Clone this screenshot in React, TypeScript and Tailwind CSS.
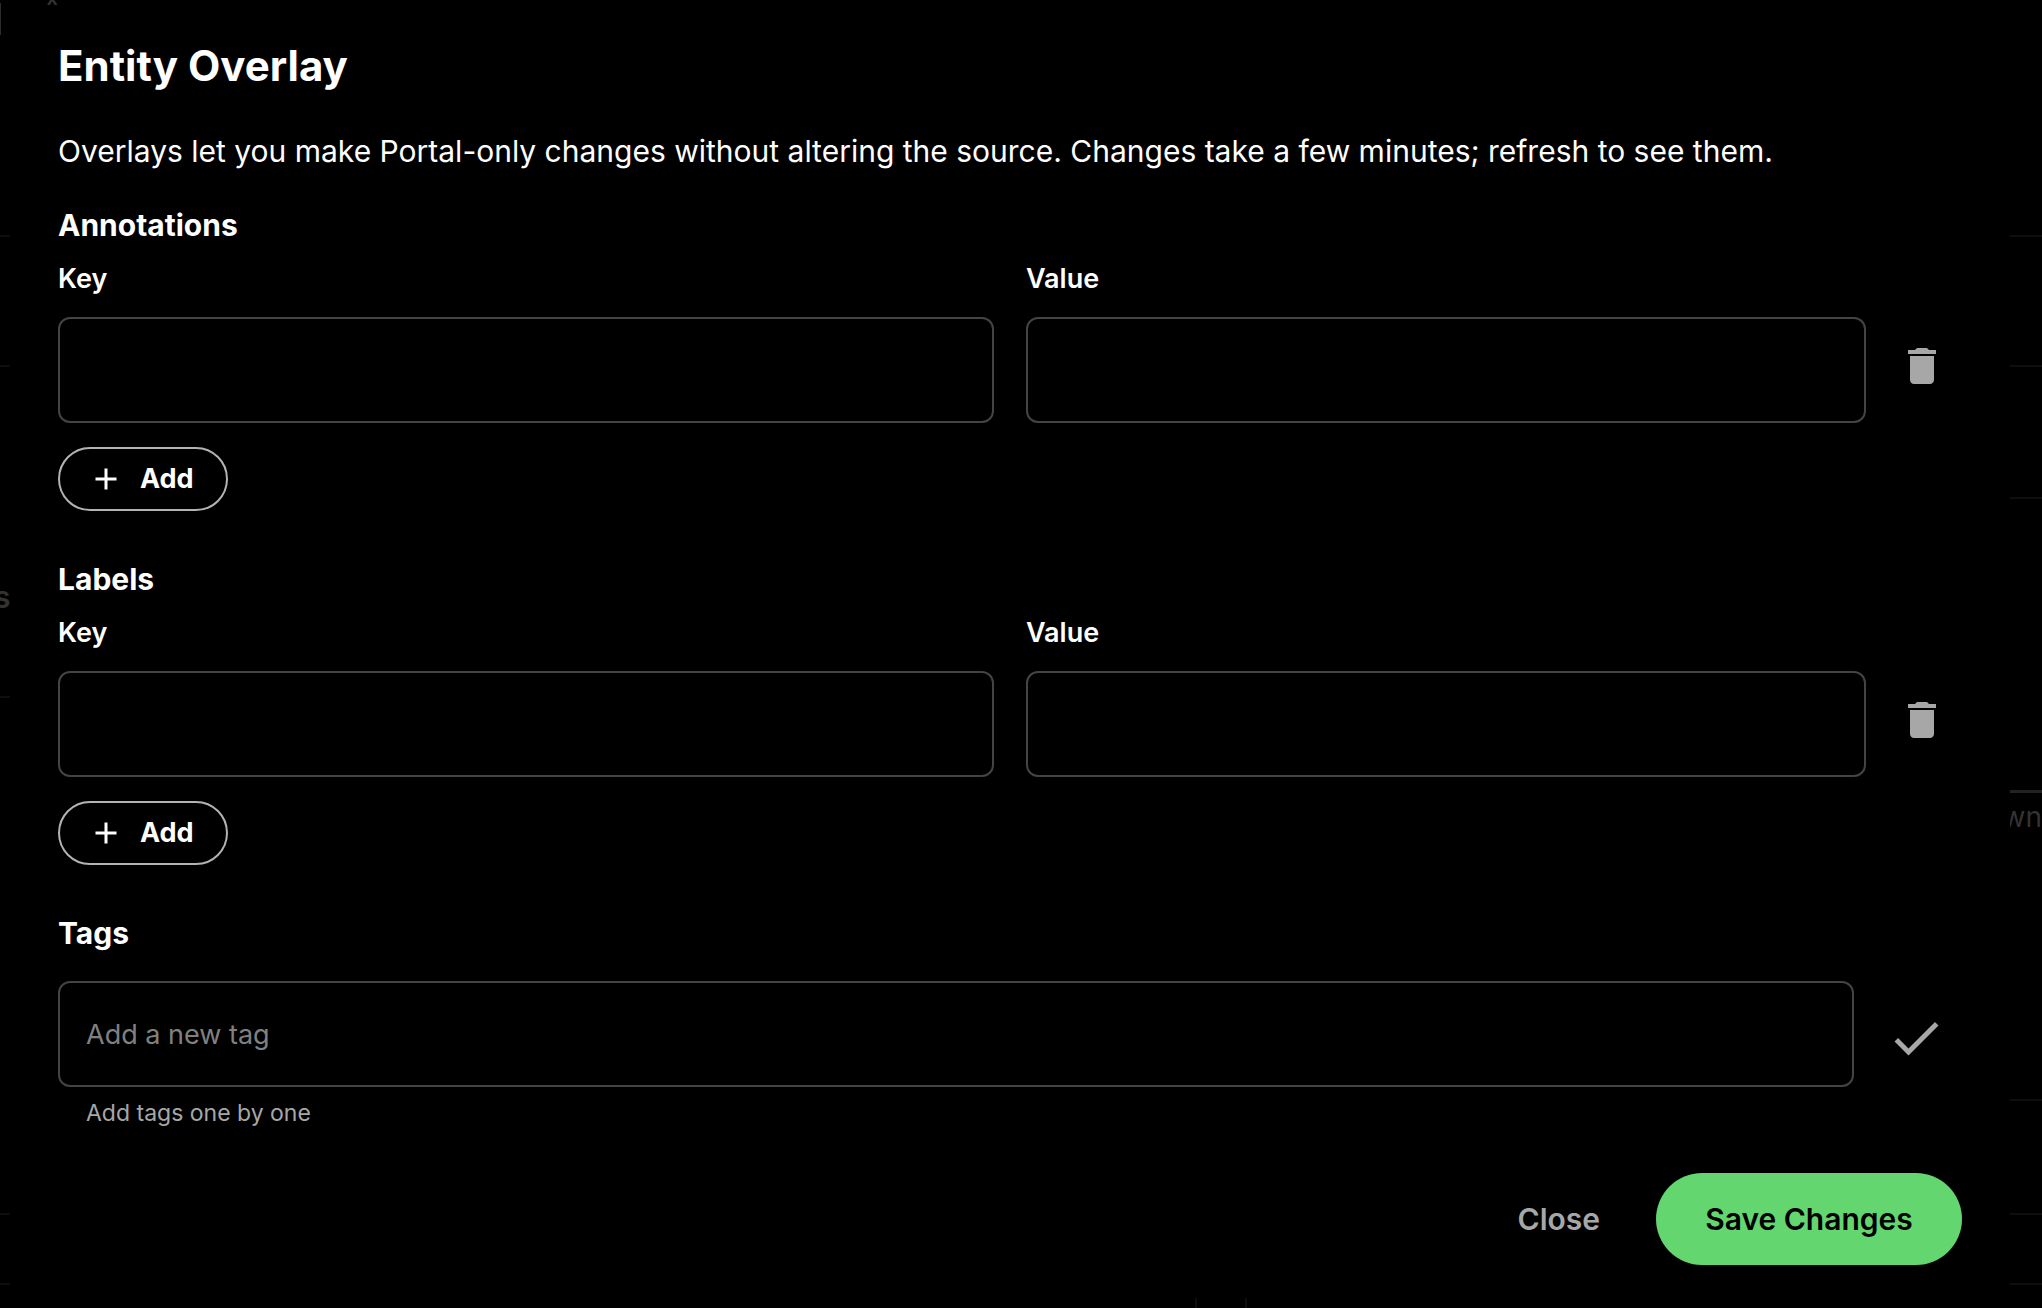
import { useState } from "react";
import { MdAdd, MdCheck, MdDelete } from "react-icons/md";

// ---------------------------------------------------------------------------
// Dimmed page behind the dialog
// ---------------------------------------------------------------------------

function PageBackdrop() {
  return (
    <div
      aria-hidden="true"
      className="col-start-1 row-start-1 flex justify-between overflow-hidden text-[30px] text-[#333333]"
    >
      <div className="flex w-16 flex-col">
        <div className="flex h-[237px] items-start justify-between border-b-2 border-[#0e0e0e]">
          <span className="mt-[3px] h-8 w-px bg-[#2c2c2c]" />
          <span className="-mt-3 mr-1.5 text-xl font-semibold leading-none">x</span>
        </div>
        <div className="h-[130px] border-b-2 border-[#0e0e0e]" />
        <div className="flex h-[331px] border-b-2 border-[#0e0e0e] pt-[212px]">
          <span className="-ml-1.5 font-semibold leading-9">s</span>
        </div>
        <div className="h-[517px] border-b-2 border-[#0e0e0e]" />
        <div className="h-[70px] border-b-2 border-[#0e0e0e]" />
      </div>

      <div className="flex flex-1 gap-12 self-end">
        <div className="-mr-12 w-7/12" />
        <div className="h-4 w-0.5 bg-[#0e0e0e]" />
        <div className="h-4 w-0.5 bg-[#0e0e0e]" />
      </div>

      <div className="flex w-10 flex-col">
        <div className="h-[237px] border-b-2 border-[#0e0e0e]" />
        <div className="h-[130px] border-b-2 border-[#0e0e0e]" />
        <div className="h-[132px] border-b-2 border-[#0e0e0e]" />
        <div className="h-[294px] border-b-3 border-[#222222]" />
        <div className="flex h-[308px] justify-end border-b-2 border-[#0e0e0e] pt-1.5 text-[28px]">
          <span className="leading-9">wn</span>
        </div>
        <div className="h-[114px] border-b-2 border-[#0e0e0e]" />
        <div className="h-[70px] border-b-2 border-[#0e0e0e]" />
      </div>
    </div>
  );
}

// ---------------------------------------------------------------------------
// Key / value section
// ---------------------------------------------------------------------------

interface KeyValueSectionProps {
  id: string;
  title: string;
}

const inputClass =
  "h-[106px] w-full rounded-xl border-2 border-[#444444] bg-black px-[26px] text-[27px] text-white outline-none placeholder:text-[#808080] focus:border-[#a7a7a7]";

const labelClass = "mb-[18px] block text-[27px] font-semibold leading-10";

function KeyValueSection({ id, title }: KeyValueSectionProps) {
  const [rows, setRows] = useState([0]);

  return (
    <section className="mb-12">
      <h3 className="text-[30px] font-bold leading-10">{title}</h3>
      {rows.map((row) => (
        <div key={row} className="mt-3.5 mb-6 flex items-end gap-8">
          <div className="grid flex-1 grid-cols-[936fr_840fr] gap-x-8">
            <div>
              <label htmlFor={`${id}-key-${row}`} className={labelClass}>
                Key
              </label>
              <input id={`${id}-key-${row}`} type="text" className={inputClass} />
            </div>
            <div>
              <label htmlFor={`${id}-value-${row}`} className={labelClass}>
                Value
              </label>
              <input id={`${id}-value-${row}`} type="text" className={inputClass} />
            </div>
          </div>
          <button
            type="button"
            aria-label={`Remove ${title} row`}
            onClick={() => setRows(rows.filter((r) => r !== row))}
            className="mr-4 mb-[33px] text-[#a7a7a7]"
          >
            <MdDelete className="size-12" />
          </button>
        </div>
      ))}
      <button
        type="button"
        onClick={() => setRows([...rows, Math.max(-1, ...rows) + 1])}
        className="flex h-16 w-[170px] items-center gap-4 rounded-full border-2 border-[#b3b3b3] pl-7 text-[27px] font-bold"
      >
        <MdAdd className="size-9" />
        Add
      </button>
    </section>
  );
}

// ---------------------------------------------------------------------------
// App
// ---------------------------------------------------------------------------

export default function App() {
  const [tag, setTag] = useState("");

  return (
    <div className="grid min-h-screen bg-black font-['Inter',sans-serif] text-white">
      <PageBackdrop />

      <div
        role="dialog"
        aria-labelledby="overlay-title"
        className="col-start-1 row-start-1 mt-2 mr-8 mb-[10px] ml-[10px] bg-black px-12 pt-8"
      >
        <h2 id="overlay-title" className="text-[42px] font-bold leading-[52px]">
          Entity Overlay
        </h2>
        <p className="mt-[35px] mb-[30px] text-[30px] leading-[48px]">
          Overlays let you make Portal-only changes without altering the source. Changes take a few
          minutes; refresh to see them.
        </p>

        <KeyValueSection id="annotations" title="Annotations" />
        <KeyValueSection id="labels" title="Labels" />

        <section>
          <h3 className="text-[30px] font-bold leading-10">
            <label htmlFor="new-tag">Tags</label>
          </h3>
          <div className="mt-7 flex items-center gap-8">
            <input
              id="new-tag"
              type="text"
              value={tag}
              onChange={(e) => setTag(e.target.value)}
              placeholder="Add a new tag"
              aria-describedby="new-tag-hint"
              className={inputClass}
            />
            <button type="button" aria-label="Add tag" className="mt-2 mr-4 shrink-0 text-[#a7a7a7]">
              <MdCheck className="size-[60px]" />
            </button>
          </div>
          <p id="new-tag-hint" className="mt-2 px-7 text-[23px] leading-9 text-[#a7a7a7]">
            Add tags one by one
          </p>
        </section>

        <div className="mt-[42px] flex items-center justify-end gap-14 text-[30px] font-semibold">
          <button type="button" className="text-[#a7a7a7]">
            Close
          </button>
          <button type="button" className="h-[92px] w-[306px] rounded-full bg-[#63d66f] text-black">
            Save Changes
          </button>
        </div>
      </div>
    </div>
  );
}
